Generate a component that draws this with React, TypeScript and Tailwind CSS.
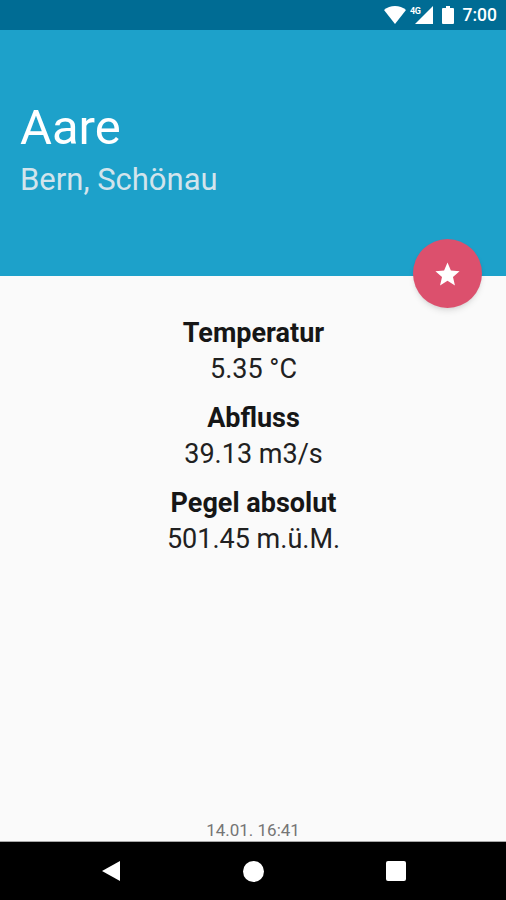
interface Measurement {
  label: string;
  value: string;
}

const measurements: Measurement[] = [
  { label: "Temperatur", value: "5.35 °C" },
  { label: "Abfluss", value: "39.13 m3/s" },
  { label: "Pegel absolut", value: "501.45 m.ü.M." },
]

function StatusBar() {
  return (
    <div className="h-[30px] shrink-0 bg-[#006c94] flex items-center justify-end pr-[9px] text-white">
      <svg width="22" height="18" viewBox="0 0 22 18" fill="currentColor">
        <path d="M11 18 0 4C3 1.500 7 0 11 0s8 1.500 11 4z" />
      </svg>
      <svg className="ml-1" width="24" height="18" viewBox="0 0 24 18" fill="currentColor">
        <path d="M23 0v18H5z" />
        <text x="0" y="8" fontSize="9" fontWeight="700" letterSpacing="-0.5">4G</text>
      </svg>
      <svg className="ml-2" width="12" height="18" viewBox="0 0 12 18" fill="currentColor">
        <path d="M4 0h4v2h3q1 0 1 1v14q0 1-1 1H1q-1 0-1-1V3q0-1 1-1h3z" />
      </svg>
      <span className="ml-[9px] mt-[2px] text-[17.500px] leading-none font-medium">7:00</span>
    </div>
  )
}

export default function App() {
  return (
    <div className="w-[506px] h-[900px] flex flex-col overflow-hidden bg-[#fafafa] font-['Roboto',sans-serif]">
      <StatusBar />

      {/* Header */}
      <header className="relative h-[246px] shrink-0 bg-[#1da1ca] pl-5 pt-[69px]">
        <h1 className="text-[49px] leading-[58px] text-white">Aare</h1>
        <p className="text-[31px] leading-[46px] text-[#d2e4ec]">Bern, Schönau</p>
        <button className="absolute right-[24px] -bottom-[32px] size-[69px] rounded-full bg-[#dc506d] text-white flex items-center justify-center shadow-md">
          <svg className="mt-0.5" width="29" height="29" viewBox="0 0 24 24" fill="currentColor">
            <path d="M12 17.270 18.180 21l-1.640-7.030L22 9.240l-7.190-.61L12 2 9.190 8.630 2 9.240l5.460 4.730L5.820 21z" />
          </svg>
        </button>
      </header>

      {/* Measurements */}
      <main className="flex-1 flex flex-col items-center gap-3 pt-[39px] pl-px text-[27px] leading-[36.400px] text-[#212121]">
        {measurements.map(m => (
          <div key={m.label} className="text-center">
            <h2 className="font-bold text-[#161616]">{m.label}</h2>
            <p>{m.value}</p>
          </div>
        ))}
      </main>
      <p className="shrink-0 text-center text-[17px] leading-[22px] text-[#757575]">14.01. 16:41</p>

      {/* Navigation bar */}
      <nav className="h-[59px] shrink-0 bg-black border-t border-[#a8a8a8] text-white flex items-center justify-between pl-[101px] pr-[100px]">
        <svg width="19" height="22" viewBox="0 0 19 22" fill="currentColor">
          <path d="M19 1v20L1 11z" />
        </svg>
        <div className="size-[21px] rounded-full bg-white" />
        <div className="size-5 rounded-[2px] bg-white" />
      </nav>
    </div>
  )
}
